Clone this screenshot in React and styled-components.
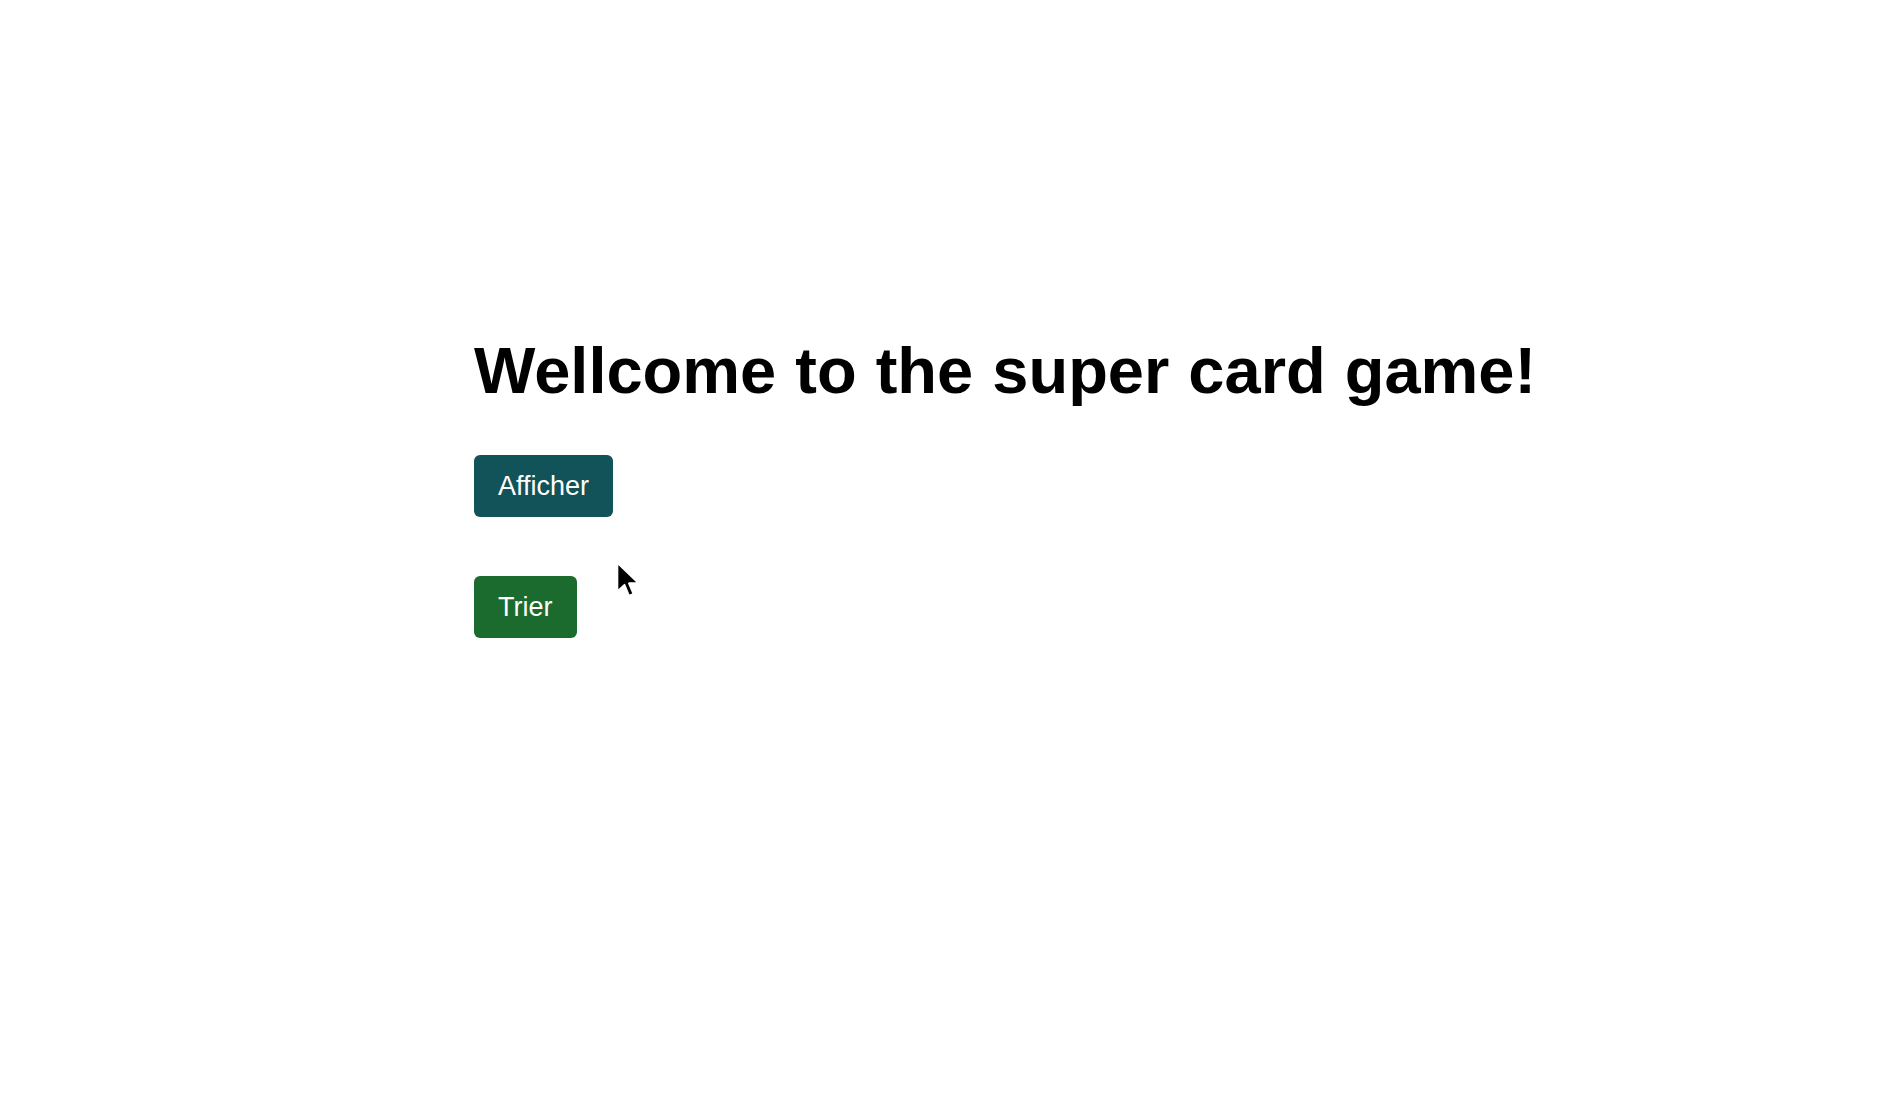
import styled, { createGlobalStyle } from "styled-components";

const GlobalStyle = createGlobalStyle`
  html, body {
    margin: 0;
    padding: 0;
    background: #ffffff;
  }
  body {
    font-family: "Liberation Sans", Arial, Helvetica, sans-serif;
  }
`;

const Page = styled.div`
  position: relative;
  width: 100%;
  min-height: 1106px;
  box-sizing: border-box;
  padding: 333px 0 0 474px;
`;

const Title = styled.h1`
  margin: 0;
  font-size: 65px;
  line-height: 75px;
  font-weight: 700;
  word-spacing: 1px;
  color: #000;
`;

const Actions = styled.div`
  display: flex;
  flex-direction: column;
  align-items: flex-start;
  gap: 59px;
  margin-top: 47px;
`;

const Button = styled.button`
  height: 62px;
  padding: 0 24px;
  border: none;
  border-radius: 6px;
  background-color: ${(props) => props.color};
  color: #fff;
  font-family: "Liberation Sans", Arial, sans-serif;
  font-size: 27px;
  cursor: pointer;
`;

const Pointer = styled.svg`
  position: absolute;
  left: 612px;
  top: 559px;
  pointer-events: none;
`;

function App() {
  return (
    <>
      <GlobalStyle />
      <Page>
        <Title>Wellcome to the super card game!</Title>
        <Actions>
          <Button color="#125259">Afficher</Button>
          <Button color="#1a6b2d">Trier</Button>
        </Actions>
        <Pointer width="34" height="44" viewBox="0 0 26 34">
          <path
            d="M4 3 L4 25 L9.5 20 L13 28.5 L16.5 27 L13 18.8 L20.5 18.8 Z"
            fill="#000"
            stroke="#fff"
            strokeWidth="1.5"
            strokeLinejoin="round"
          />
        </Pointer>
      </Page>
    </>
  );
}

export default App;
